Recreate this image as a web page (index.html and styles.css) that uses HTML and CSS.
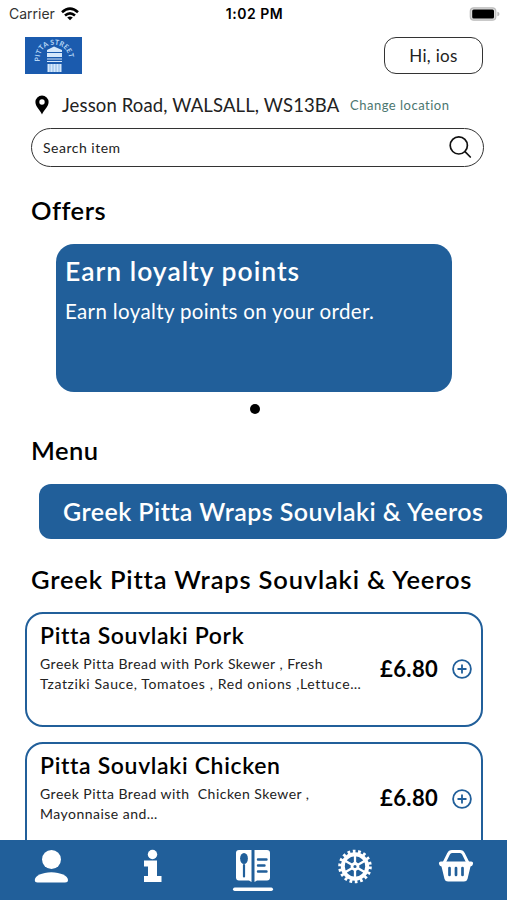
FILE: index.html
```html
<!DOCTYPE html>
<html lang="en">
<head>
<meta charset="utf-8">
<title>Pitta Street</title>
<link rel="stylesheet" href="styles.css">
</head>
<body>
<div class="app">
  <div class="status">
    <div class="carrier"><span>Carrier</span>
      <svg width="18" height="14" viewBox="0 0 18 14" fill="none" stroke="#000" stroke-width="2.6"><path d="M1 5.2Q9-2 17 5.2M4 8.5Q9 4.200 14 8.5"/><path d="M9 13.2L6.2 10.6Q9 8.6 11.8 10.6Z" fill="#000" stroke="none"/></svg>
    </div>
    <span class="time">1:02 PM</span>
    <svg class="battery" width="31" height="14" viewBox="0 0 31 14"><rect x="1.3" y=".8" width="25.5" height="12.4" rx="3.5" fill="#ddd" stroke="#bbb" stroke-width="1.2"/><rect x="3.2" y="2.6" width="21.8" height="8.8" rx="1.5" fill="#000"/><path d="M28.4 4.7Q30.5 5.2 30.5 7T28.4 9.3Z" fill="#bbb"/></svg>
  </div>
  <header class="top">
    <svg class="logo" width="57" height="37" viewBox="0 0 57 37">
      <rect width="57" height="37" fill="#1b5bae"/>
      <path id="arc" d="M15 24.5C12 2 46 2 44 24.5" fill="none"/>
      <text class="logo-text"><textPath href="#arc" textLength="47">PITTA STREET</textPath></text>
      <path d="M22 13L29 9.5L37 13V15H22ZM22 16H37V20H22ZM22.5 27H36.5V35H22.5Z" fill="#d5e8fb"/>
      <path d="M22 22H37M22 24.5H37" stroke="#d5e8fb" stroke-width="1.2"/>
      <path d="M25 27V35M28 27V35M31 27V35M34 27V35" stroke="#6ca0dc" stroke-width=".7"/>
    </svg>
    <button class="greet"><span>Hi, ios</span></button>
  </header>
  <div class="location">
    <svg width="14" height="20" viewBox="0 0 14 20"><path fill="#000" fill-rule="evenodd" d="M7 .5A6.6 6.6 0 0 0 .4 7.1C.4 12 5.5 15.5 7 19.5C8.5 15.5 13.6 12 13.6 7.1A6.6 6.6 0 0 0 7 .5ZM7 4.3A2.7 2.7 0 1 1 7 9.7A2.7 2.7 0 1 1 7 4.3Z"/></svg>
    <span class="address">Jesson Road, WALSALL, WS13BA</span>
    <a class="change">Change location</a>
  </div>
  <div class="search"><span>Search item</span>
    <svg width="24" height="24" viewBox="0 0 24 24" fill="none" stroke="#111" stroke-width="1.7" stroke-linecap="round"><circle cx="10.8" cy="10.4" r="8.6"/><path d="M17 16.7L22.3 22"/></svg>
  </div>
  <h2 class="offers-title">Offers</h2>
  <section class="offer">
    <h3>Earn loyalty points</h3>
    <p>Earn loyalty points on your order.</p>
  </section>
  <div class="dot"></div>
  <h2 class="menu-title">Menu</h2>
  <div class="tab">Greek Pitta Wraps Souvlaki &amp; Yeeros</div>
  <h2 class="category">Greek Pitta Wraps Souvlaki &amp; Yeeros</h2>
  <article class="item">
    <h3>Pitta Souvlaki Pork</h3>
    <div class="row">
      <p>Greek Pitta Bread with Pork Skewer , Fresh<br><span class="tail">Tzatziki Sauce, Tomatoes , Red onions ,Lettuce…</span></p>
      <div class="buy"><b>£6.80</b><svg width="20" height="20" viewBox="0 0 20 20" fill="none" stroke="#215f9a" stroke-width="1.8"><circle cx="10" cy="10" r="8.9"/><path d="M5.5 10H14.5M10 5.5V14.5"/></svg></div>
    </div>
  </article>
  <article class="item">
    <h3>Pitta Souvlaki Chicken</h3>
    <div class="row">
      <p>Greek Pitta Bread with&nbsp; Chicken Skewer ,<br>Mayonnaise and…</p>
      <div class="buy"><b>£6.80</b><svg width="20" height="20" viewBox="0 0 20 20" fill="none" stroke="#215f9a" stroke-width="1.8"><circle cx="10" cy="10" r="8.9"/><path d="M5.5 10H14.5M10 5.5V14.5"/></svg></div>
    </div>
  </article>
</div>
<nav class="nav">
  <a><svg width="36" height="44" viewBox="0 0 36 44" fill="#fff"><circle cx="18.5" cy="13.5" r="9.5"/><path d="M1.8 34C1.8 30 9 26.3 18.3 26.3S35 30 35 34Q35 36.5 32 36.5H4.5Q1.8 36.5 1.8 34Z"/></svg></a>
  <a><svg width="36" height="44" viewBox="0 0 36 44" fill="#fff"><circle cx="18.5" cy="8.5" r="4.7"/><path d="M10 14.5H23V30H27.5V36H10V30H14V20.5H10Z"/></svg></a>
  <a><svg width="42" height="50" viewBox="0 0 42 50"><path fill="#fff" d="M7 4H19.5V36L17 34.5H7Q4 34.5 4 31.5V7Q4 4 7 4ZM22.5 4H35Q38 4 38 7V31.5Q38 34.5 35 34.5H25L22.5 36Z"/><path d="M12 19V30.5" stroke="#215f9a" stroke-width="2.2" stroke-linecap="round"/><ellipse cx="12" cy="12.5" rx="3.9" ry="5.5" fill="#215f9a"/><path d="M26 13.5H34.5M26 19.5H32.5M26 25.5H34.5" stroke="#215f9a" stroke-width="2.4" stroke-linecap="round"/><rect x="1" y="41.5" width="40" height="3.5" rx="1.7" fill="#fff"/></svg></a>
  <a><svg width="36" height="44" viewBox="0 0 36 44" fill="none" stroke="#fff"><circle cx="18" cy="20.5" r="12.2" stroke-width="4"/><circle cx="18" cy="20.5" r="15.2" stroke-width="3.2" stroke-dasharray="2.7 2.606"/><path d="M18 8V33M7.2 14.25L28.8 26.75M7.2 26.75L28.8 14.25" stroke-width="2.3"/><circle cx="18" cy="20.5" r="3" stroke-width="2.8" fill="#215f9a"/></svg></a>
  <a><svg width="36" height="44" viewBox="0 0 36 44"><path d="M5.5 18L10.5 8Q11.5 5.5 14 5.5H22Q24.5 5.5 25.5 8L30.5 18" fill="none" stroke="#fff" stroke-width="3"/><path fill="#fff" d="M3 15.5H33Q35.5 15.5 35 18Q34.5 20 32.5 20.5L29.5 33Q28.8 35.5 26 35.5H10Q7.2 35.5 6.5 33L3.5 20.5Q1.5 20 1 18Q.5 15.5 3 15.5Z"/><path d="M11.5 22V29M18 22V29M24.5 22V29" stroke="#215f9a" stroke-width="2.7" stroke-linecap="round"/></svg></a>
</nav>
</body>
</html>
```
FILE: styles.css
```css
* { box-sizing: border-box; }
html { overflow: hidden; }
body { margin: 0; width: 507px; height: 900px; overflow: hidden; display: flex; flex-direction: column; background: #fff; color: #000; font-family: Lato, "Liberation Sans", sans-serif; font-variant-ligatures: none; white-space: nowrap; }
h2, h3, p { margin: 0; font-weight: 600; }
h2 { font-size: 25.5px; line-height: 30px; padding-left: 31px; letter-spacing: .5px; }
svg { display: block; flex: none; }
.app { flex: 1; min-height: 0; overflow: hidden; }
.status { height: 27px; padding: 0 7px 0 9px; display: grid; grid-template-columns: 1fr auto 1fr; align-items: center; font-family: Inter, sans-serif; font-size: 14px; }
.carrier { display: flex; gap: 6px; align-items: center; color: #333; }
.time { font-weight: 600; font-size: 14px; letter-spacing: .5px; }
.battery { justify-self: end; }
.top { display: flex; justify-content: space-between; padding: 10px 24px 0 25px; height: 56px; }
.logo-text { font-size: 7px; font-weight: 700; fill: #b7d7f6; }
.greet { width: 99px; height: 37px; border: 1.5px solid #333; border-radius: 12px; background: #fff; font: 17px Lato, sans-serif; letter-spacing: .3px; color: #222; padding: 0; }
.location { display: flex; align-items: center; height: 43px; padding-left: 35px; }
.address { margin-left: 13px; font-size: 18.5px; letter-spacing: .13px; color: #222; width: 277px; }
.change { margin-left: 11px; font-size: 13px; color: #4b766f; letter-spacing: .5px; }
.search { margin: 2px 23px 0 31px; height: 39px; border: 1.5px solid #333; border-radius: 20px; display: flex; justify-content: space-between; align-items: center; padding: 0 11px 1px; font-size: 14px; letter-spacing: .5px; color: #222; }
.offers-title { margin-top: 28px; }
.offer { margin: 19px 55px 0 56px; height: 148px; border-radius: 18px; background: #215f9a; color: #fff; padding: 11px 9px; }
.offer h3 { font-size: 26.5px; line-height: 32px; letter-spacing: 1px; }
.offer p { font-size: 20.5px; font-weight: 400; line-height: 26px; margin-top: 11px; letter-spacing: .36px; }
.dot { width: 10px; height: 10px; border-radius: 50%; background: #000; margin: 12px auto 0 250px; }
.menu-title { margin-top: 21px; }
.tab { margin: 19px 0 0 39px; height: 55px; border-radius: 12px; background: #215f9a; color: #fff; padding-left: 24px; font-size: 25px; font-weight: 600; line-height: 54px; letter-spacing: .45px; }
.category { margin: 25px 0 18px; letter-spacing: .82px; }
.item { margin: 0 24px 14.5px 25px; height: 115px; border: 2.5px solid #215f9a; border-radius: 18px; padding: 6px 9px 0 13px; }
.item h3 { font-size: 23px; line-height: 30px; letter-spacing: .65px; }
.row { display: flex; justify-content: space-between; margin-top: 4px; }
.row p { font-size: 14px; line-height: 20px; font-weight: 400; letter-spacing: .48px; color: #222; }
.tail { letter-spacing: .62px; }
.buy { display: flex; align-items: center; height: 30px; width: 92px; justify-content: space-between; }
.buy b { font-size: 22px; font-weight: 700; letter-spacing: .4px; margin-top: -2px; }
.nav { height: 60px; background: #215f9a; display: grid; grid-template-columns: repeat(5, 1fr); }
.nav a { display: flex; justify-content: center; padding-top: 6px; }
```
